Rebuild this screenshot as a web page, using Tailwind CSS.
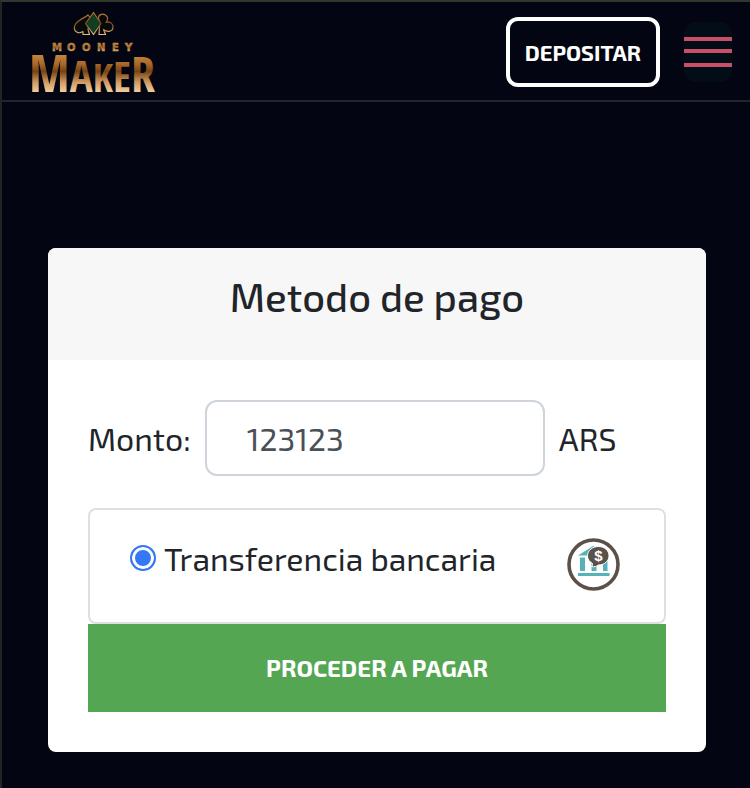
<!DOCTYPE html>
<html lang="es">
<head>
<meta charset="utf-8">
<meta name="viewport" content="width=device-width, initial-scale=1">
<title>Metodo de pago</title>
<script src="https://cdn.jsdelivr.net/npm/@tailwindcss/browser@4"></script>
</head>
<body class="flex min-h-screen flex-col border-t-2 border-l-2 border-t-[#31372f] border-l-[#242424] bg-[#030612] font-['Exo_2','Noto_Sans',sans-serif] text-[#212529]">
<header class="flex h-[100px] items-center justify-between border-b-2 border-[#22242e] pt-[2px] pr-[18px] pl-6">
  <a href="#" aria-label="Mooney Maker">
    <svg width="136" height="88" viewBox="26 8 136 88" class="block overflow-visible">
      <defs>
        <linearGradient id="gold" gradientUnits="userSpaceOnUse" x1="0" y1="54" x2="0" y2="93">
          <stop offset="0" stop-color="#c8883c"/><stop offset=".25" stop-color="#a9692b"/><stop offset=".45" stop-color="#774413"/><stop offset=".72" stop-color="#cf9a61"/><stop offset="1" stop-color="#f4d3a3"/>
        </linearGradient>
        <linearGradient id="trim" x1="0" y1="0" x2="0" y2="1">
          <stop offset="0" stop-color="#b77935"/><stop offset=".5" stop-color="#80501f"/><stop offset="1" stop-color="#e5bb80"/>
        </linearGradient>
        <linearGradient id="goldSmall" gradientUnits="userSpaceOnUse" x1="0" y1="43" x2="0" y2="52">
          <stop offset="0" stop-color="#c88942"/><stop offset=".5" stop-color="#a06a30"/><stop offset="1" stop-color="#e6b679"/>
        </linearGradient>
      </defs>
      <g fill="#07090d" stroke="url(#trim)" stroke-width="1.2" stroke-linejoin="round">
        <path d="M88 15c-3 3-12 5-13.500 11.500-1 5 4 8 8.500 5L83 34.500h6.500l-1.500-5 2-12z"/>
        <path d="M99 20c-2-5 3-7 6.500-5 3 2 2.500 5 .5 7.500 4-1 7.500 1 7 5-.5 4.500-6 5-9.500 2l2 5h-6.500l.5-7z"/>
        <path d="M93.500 12.500l7.500 11-7.500 11-8-11z" fill="#123d20"/>
      </g>
      <text y="51" font-family="'DejaVu Sans', sans-serif" font-weight="700" font-size="10" fill="url(#goldSmall)" stroke="url(#goldSmall)" stroke-width=".5"><tspan x="52">M</tspan><tspan x="67">O</tspan><tspan x="82">O</tspan><tspan x="97">N</tspan><tspan x="112">E</tspan><tspan x="125">Y</tspan></text>
      <text x="29" y="92" font-family="'Open Sans Condensed', 'Roboto Condensed', 'Exo 2', sans-serif" font-weight="700" fill="url(#gold)"><tspan font-size="52">M</tspan><tspan font-size="43">A</tspan><tspan font-size="40">K</tspan><tspan font-size="42">E</tspan><tspan font-size="48">R</tspan></text>
    </svg>
  </a>
  <div class="flex items-center gap-6">
    <button class="h-[70px] rounded-xl border-4 border-white px-[15px] text-[22px] font-bold text-white">DEPOSITAR</button>
    <button aria-label="Menú" class="flex h-[60px] w-12 flex-col justify-center gap-2 rounded-xl bg-[#020d17]">
      <span class="h-1 bg-[#ca5069]"></span><span class="h-1 bg-[#ca5069]"></span><span class="mt-[2px] h-1 bg-[#ca5069]"></span>
    </button>
  </div>
</header>
<main class="pt-[146px] pr-11 pb-9 pl-[46px]">
  <form class="overflow-hidden rounded-lg bg-white">
    <h1 class="h-28 bg-[#f7f7f7] pt-5 text-center text-[40px] leading-[56px] font-medium">Metodo de pago</h1>
    <div class="p-10">
      <div class="flex items-center gap-[14px] text-[32px]">
        <label for="amount">Monto:</label>
        <input id="amount" type="text" inputmode="numeric" value="123123" class="h-[76px] w-[340px] min-w-0 rounded-xl border-2 border-[#ced4da] px-10 text-[#495057]">
        <span>ARS</span>
      </div>
      <div class="mt-8 flex h-[116px] items-center justify-between rounded-lg border-2 border-[#dfdfdf] pr-11 pb-1 pl-10">
        <label for="transfer" class="mb-3 flex items-center gap-2 text-[32px]">
          <input id="transfer" type="radio" name="method" checked class="size-[26px] shrink-0 appearance-none rounded-full border-2 border-[#3478f6] bg-[#3478f6] shadow-[inset_0_0_0_3px_white]">
          <span>Transferencia bancaria</span>
        </label>
        <svg width="53" height="53" viewBox="0 0 53 53" class="shrink-0" aria-hidden="true">
          <circle cx="26.500" cy="26.500" r="24.500" fill="white" stroke="#5b5149" stroke-width="3.600"/>
          <path d="M11 17.500L26 8l11 5v4.500zM13 19.500h5v13.500h-5zM24.500 19.500h5v13.500h-5zM36 19.500h4.500v13.500H36zM11 35h31.500v3H11z" fill="#55b2b9"/>
          <path d="M31.500 8.500c6 0 10.500 4 10.500 9.200S37.500 27 31.500 27c-2 1.500-4.500 2.200-7 1.500 1.300-1 1.300-2.200.8-3.200-3-1.700-4.800-4-4.800-7.500 0-5.300 5-9.300 11-9.300z" fill="#5b5149" stroke="white"/>
          <text x="31.500" y="23" text-anchor="middle" font-family="Liberation Sans" font-size="15" font-weight="700" fill="white">$</text>
        </svg>
      </div>
      <button type="button" class="h-[88px] w-full bg-[#54a653] text-2xl font-bold text-white">PROCEDER A PAGAR</button>
    </div>
  </form>
</main>
</body>
</html>
